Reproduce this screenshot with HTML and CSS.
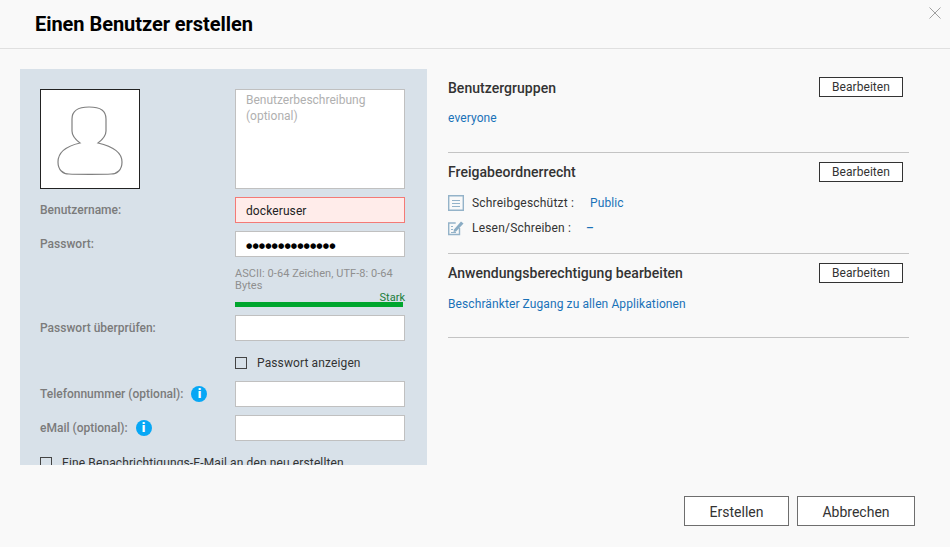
FILE: index.html
```html
<!DOCTYPE html>
<html lang="de">
<head>
<meta charset="utf-8">
<title>Einen Benutzer erstellen</title>
<link rel="stylesheet" href="styles.css">
</head>
<body>
<div class="dialog">
  <header class="head">
    <h1 class="title">Einen Benutzer erstellen</h1>
    <svg class="close" width="12" height="12" viewBox="0 0 12 12"><path d="M.5.5l11 11M11.500.5l-11 11" fill="none" stroke="#a0a0a0" stroke-width="1"/></svg>
  </header>
  <div class="content">
    <section class="form">
      <div class="top">
        <div class="photo">
          <svg width="70" height="72" viewBox="0 0 70 72"><path d="M34 4C22 4 17 8 17 16V28C17 33 21 37 25 40C12 43 3 48 3 59C3 67 8 71 14 71C20 71.500 50 71.500 56 71C62 71 67 67 67 59C67 48 56 43 43 40C47 37 51 33 51 28V16C51 8 46 4 34 4z" fill="none" stroke="#808080" stroke-width="1.200"/></svg>
        </div>
        <div class="desc">Benutzerbeschreibung (optional)</div>
      </div>
      <div class="row">
        <label class="lbl">Benutzername:</label>
        <div class="field error">dockeruser</div>
      </div>
      <div class="row">
        <label class="lbl">Passwort:</label>
        <div class="field dots">●●●●●●●●●●●●●●</div>
      </div>
      <div class="pwinfo">
        <p class="hint">ASCII: 0-64 Zeichen, UTF-8: 0-64 Bytes</p>
        <div class="strength">Stark</div>
        <div class="bar"></div>
      </div>
      <div class="row">
        <label class="lbl">Passwort überprüfen:</label>
        <div class="field"></div>
      </div>
      <div class="show">
        <span class="check"></span>
        <span class="checktext">Passwort anzeigen</span>
      </div>
      <div class="row">
        <label class="lbl">Telefonnummer (optional):<span class="info">i</span></label>
        <div class="field"></div>
      </div>
      <div class="row">
        <label class="lbl">eMail (optional):<span class="info">i</span></label>
        <div class="field"></div>
      </div>
      <div class="notify">
        <span class="check"></span>
        <span class="checktext">Eine Benachrichtigungs-E-Mail an den neu erstellten</span>
      </div>
    </section>
    <section class="side">
      <div class="block b1">
        <div class="bhead"><h2 class="btitle">Benutzergruppen</h2><button class="edit">Bearbeiten</button></div>
        <a class="link first">everyone</a>
      </div>
      <div class="block b2">
        <div class="bhead"><h2 class="btitle">Freigabeordnerrecht</h2><button class="edit">Bearbeiten</button></div>
        <div class="perm p1">
          <svg class="picon" width="16" height="16" viewBox="0 0 16 16"><path d="M.7.700h14.600v14.600H.7z" fill="none" stroke="#94b3c9" stroke-width="1.400"/><path d="M4 5.500h8M4 8.500h8M4 11.500h8" stroke="#94b3c9"/></svg>
          <span class="pname w1">Schreibgeschützt :</span><a class="link">Public</a>
        </div>
        <div class="perm">
          <svg class="picon" width="16" height="16" viewBox="0 0 16 16"><path d="M11.500 8v6.500H.7V3h7" fill="none" stroke="#94b3c9" stroke-width="1.400"/><path d="M3 6.500h2M3 9.500h2M3 12.500h5" stroke="#94b3c9"/><path d="M6 9.500L13 1.500L15.500 3.500L8 11.500L5.500 12z" fill="#8aacc4"/></svg>
          <span class="pname w2">Lesen/Schreiben :</span><a class="link dash">–</a>
        </div>
      </div>
      <div class="block b3">
        <div class="bhead"><h2 class="btitle">Anwendungsberechtigung bearbeiten</h2><button class="edit">Bearbeiten</button></div>
        <a class="link first">Beschränkter Zugang zu allen Applikationen</a>
      </div>
    </section>
  </div>
  <footer class="foot">
    <button class="action a1">Erstellen</button>
    <button class="action a2">Abbrechen</button>
  </footer>
</div>
</body>
</html>
```
FILE: styles.css
```css
* { box-sizing: border-box; }
html, body { margin: 0; padding: 0; }
body { width: 950px; height: 547px; overflow: hidden; background: #f9f9f9; font-family: Roboto, "Liberation Sans", sans-serif; color: #333; }
.dialog { display: flex; flex-direction: column; height: 547px; }
.head { height: 49px; border-bottom: 1px solid #e0e0e0; padding-left: 35px; position: relative; }
.title { margin: 0; font-size: 20px; line-height: 49px; font-weight: 700; color: #000; letter-spacing: -.05px; }
.close { position: absolute; left: 929px; top: 7px; }
.content { display: flex; padding: 20px 0 0 20px; }
.form { width: 407px; height: 396px; overflow: hidden; background: #d8e1e9; padding: 20px 22px 0 20px; }
.top { display: flex; justify-content: space-between; margin-bottom: 8px; }
.photo { width: 100px; height: 100px; background: #fff; border: 1px solid #222; display: flex; align-items: center; justify-content: center; }
.desc { width: 170px; height: 100px; background: #fff; border: 1px solid #c0c0c0; padding: 2px 10px; font-size: 12px; line-height: 16px; color: #b0b0b0; }
.row { display: flex; justify-content: space-between; align-items: center; height: 26px; margin-bottom: 8px; }
.lbl { font-size: 12px; font-weight: 500; color: #7b7b7b; display: flex; align-items: center; }
.field { width: 170px; height: 26px; background: #fff; border: 1px solid #c0c0c0; padding: 1px 10px 0; font-size: 12px; letter-spacing: .1px; line-height: 24px; color: #222; }
.error { background: #ffecea; border-color: #f47a76; }
.dots { font-family: "DejaVu Sans", sans-serif; font-size: 7.300px; letter-spacing: .03px; color: #000; line-height: 25px; }
.pwinfo { margin: 0 0 8px 195px; width: 170px; }
.hint { margin: 0; padding-top: 3px; font-size: 11px; letter-spacing: .05px; line-height: 12px; color: #8f8f8f; height: 27px; }
.strength { font-size: 11px; line-height: 12px; height: 10px; text-align: right; color: #1a7d3a; }
.bar { width: 168px; height: 5px; background: #00a62e; }
.show { display: flex; align-items: center; height: 14px; margin: 15px 0 11px 195px; }
.check { width: 12px; height: 12px; border: 1px solid #444; flex: none; }
.checktext { margin-left: 10px; font-size: 12px; letter-spacing: .12px; color: #333; }
.info { display: inline-block; width: 16px; height: 16px; border-radius: 50%; background: #07a7f5; color: #fff; font-size: 13px; font-weight: 900; line-height: 16px; text-align: center; margin-left: 8px; }
.notify { display: flex; align-items: center; height: 14px; margin-top: 15px; }
.side { width: 461px; margin-left: 21px; }
.block { border-bottom: 1px solid #c4c4c4; }
.bhead { display: flex; justify-content: space-between; align-items: center; height: 20px; padding-right: 6px; }
.btitle { margin: 0; font-size: 14px; font-weight: 500; letter-spacing: .03px; color: #333; }
.edit { width: 84px; height: 20px; padding: 0; background: #fff; border: 1px solid #333; font: 12px Roboto, sans-serif; letter-spacing: .05px; color: #333; }
.link { font-size: 12px; letter-spacing: .1px; color: #1a72b8; }
.dash { font-weight: 500; }
.first { display: block; margin-top: 13px; line-height: 16px; }
.b1 { height: 84px; margin-bottom: 9px; padding-top: 8px; }
.b1 .btitle { padding-top: 2px; }
.b2 { height: 92px; margin-bottom: 9px; }
.b3 { height: 75px; }
.perm { display: flex; align-items: center; height: 16px; font-size: 12px; margin-top: 9px; }
.p1 { margin-top: 13px; }
.picon { flex: none; margin-right: 8px; }
.pname { color: #333; letter-spacing: .2px; }
.w1 { width: 118px; }
.w2 { width: 114px; }
.foot { display: flex; justify-content: flex-end; gap: 8px; padding: 31px 35px 0 0; }
.action { height: 30px; background: #fff; border: 1px solid #6e6e6e; font: 14px Roboto, sans-serif; color: #333; padding: 2px 0 0; }
.a1 { width: 105px; }
.a2 { width: 118px; }
```
